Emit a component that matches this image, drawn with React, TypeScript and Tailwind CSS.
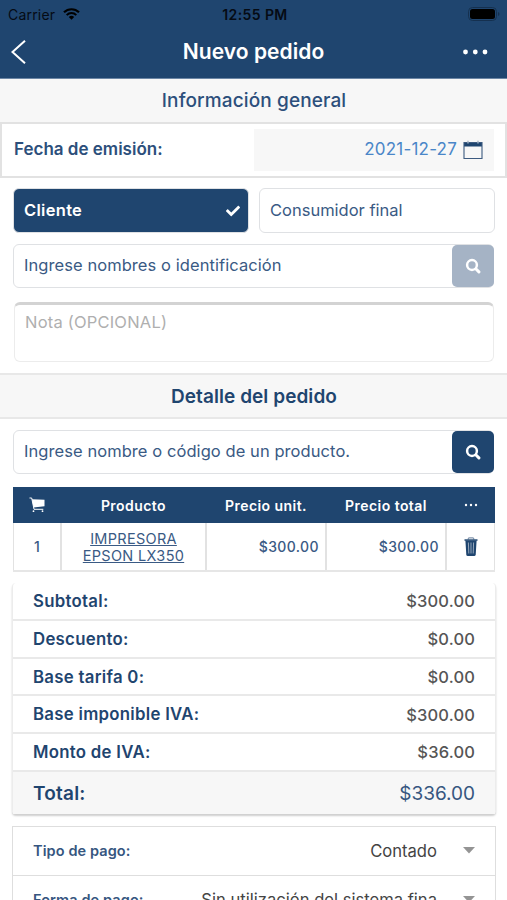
import { FaCheck } from "react-icons/fa";

const totals = [
  { label: "Subtotal:", value: "$300.00" },
  { label: "Descuento:", value: "$0.00" },
  { label: "Base tarifa 0:", value: "$0.00" },
  { label: "Base imponible IVA:", value: "$300.00" },
  { label: "Monto de IVA:", value: "$36.00" },
];

function SearchIcon() {
  return (
    <svg className="mr-px" width="16" height="16" viewBox="0 0 16 16" fill="none" stroke="white">
      <circle cx="7" cy="7" r="4.9" strokeWidth="2.5" />
      <path d="M11 11l2.9 2.9" strokeWidth="3" strokeLinecap="round" />
    </svg>
  );
}

function CalendarIcon() {
  return (
    <svg width="20" height="20" viewBox="0 0 20 20" fill="none">
      <path d="M1 2h18v4.5H1z" fill="#1f456f" />
      <path d="M1 2.5h18v16H1z" stroke="#3d5b80" strokeWidth="1.1" />
      <path d="M5 .8v2.6M15 .8v2.6" stroke="#a3b2c4" strokeWidth="1.4" />
    </svg>
  );
}

function CartIcon() {
  return (
    <svg className="mx-auto" width="16" height="16" viewBox="0 0 16 16" fill="none">
      <path d="M3 2.2l12.500.6v6.400L4.500 10.500z" fill="white" />
      <path d="M.5 1h2.200L5 12.300h9.300" stroke="white" strokeWidth="1" />
      <circle cx="4.500" cy="14.200" r=".9" fill="white" />
      <circle cx="13.500" cy="14.200" r=".9" fill="white" />
    </svg>
  );
}

function TrashIcon() {
  return (
    <svg width="14" height="20" viewBox="0 0 14 20" fill="none">
      <path d="M4.3 2.500V1.700q0-.9.9-.9h3.600q.9 0 .9.900v.8" stroke="#8295ad" strokeWidth="1.300" />
      <path d="M.5 2.300h13v1.500H.5z" fill="#1f456f" />
      <path d="M1.400 3.500h11.200l-.9 14q-.1 1.500-1.500 1.500H3.800q-1.400 0-1.500-1.500z" fill="#1f456f" />
      <path d="M4.400 5.500l.4 11M7 5.500v11M9.600 5.500l-.4 11" stroke="#a3b2c4" strokeWidth=".9" />
    </svg>
  );
}

function StatusBar() {
  return (
    <div className="flex h-7 items-center justify-between pr-[7px] pl-2 text-[#050b14]">
      <div className="flex w-40 items-center gap-2">
        <span className="text-[14px] tracking-[0.2px]">Carrier</span>
        <svg width="17" height="12" viewBox="0 0 17 12" fill="none" stroke="black">
          <path d="M1 4.3a10.7 10.7 0 0 1 15 0" strokeWidth="2.2" />
          <path d="M3.7 7.1a6.8 6.8 0 0 1 9.6 0" strokeWidth="2" />
          <path d="M8.5 11.8L5.8 9.1a3.8 3.8 0 0 1 5.4 0z" fill="black" stroke="none" />
        </svg>
      </div>
      <span className="pl-0.5 text-[14px] font-semibold tracking-[0.4px]">12:55 PM</span>
      <div className="flex w-40 justify-end">
        <svg width="32" height="14" viewBox="0 0 32 14">
          <rect x=".5" y=".5" width="28" height="13" rx="4" fill="none" stroke="#15304f" />
          <rect x="2" y="2" width="25" height="10" rx="2.5" fill="black" />
          <path d="M30 5v4q1.5-.5 1.5-2t-1.5-2z" fill="#15304f" />
        </svg>
      </div>
    </div>
  );
}

function Header() {
  return (
    <header className="h-[79px] border-b border-[#6c86a5] bg-[#1f456f]">
      <StatusBar />
      <div className="flex h-12 items-center justify-between px-[11px] text-white">
        <svg width="40" height="26" viewBox="0 0 40 26" fill="none" stroke="white" strokeWidth="2">
          <path d="M14 1.7L1.5 13L14 24.3" />
        </svg>
        <h1 className="text-[21px] font-semibold tracking-[0.05px]">Nuevo pedido</h1>
        <svg width="40" height="6" viewBox="0 0 40 6" fill="white">
          <circle cx="9.5" cy="3" r="2.4" />
          <circle cx="19.3" cy="3" r="2.4" />
          <circle cx="29" cy="3" r="2.4" />
        </svg>
      </div>
    </header>
  );
}

function SearchBox({ text, disabled }: { text: string; disabled?: boolean }) {
  return (
    <div className="mx-[13px] flex h-11 items-center justify-between rounded-md border border-[#dfe1e4] pl-[10px] text-[16.5px] tracking-[0.07px] text-[#3a5a84]">
      <span className="-mt-0.5">{text}</span>
      <button
        className={`-mr-px flex h-[42px] w-[42px] items-center justify-center rounded-[5px] ${
          disabled ? "bg-[#a5b3c5]" : "bg-[#1f456f]"
        }`}
      >
        <SearchIcon />
      </button>
    </div>
  );
}

function PaymentRow({ label, value }: { label: string; value: string }) {
  return (
    <div className="flex h-[49px] items-center border-b border-[#dedede] px-5">
      <span className="grow text-[14.5px] font-semibold tracking-[0.1px] text-[#365680]">{label}</span>
      <span className="text-[16.6px] text-[#444]">{value}</span>
      <svg className="ml-[26px]" width="12" height="7" viewBox="0 0 12 7">
        <path d="M0 0h12L6 6.5z" fill="#949494" />
      </svg>
    </div>
  );
}

export default function App() {
  return (
    <div className="h-[900px] overflow-hidden bg-white font-['Inter','Liberation_Sans',sans-serif] text-[#1f456f]">
      <Header />

      <h2 className="flex h-[43px] items-center justify-center bg-[#f7f7f7] pt-0.5 pl-px text-[19px] font-medium tracking-[0.12px] text-[#2c4f7b]">
        Información general
      </h2>
      <div className="flex h-14 items-center justify-between border-2 border-[#e2e2e2] pr-[11px] pl-3">
        <span className="text-[17px] font-semibold text-[#2c4f7b]">Fecha de emisión:</span>
        <div className="flex h-[42px] w-60 items-center justify-end gap-[6px] bg-[#f7f7f7] pr-[11px]">
          <span className="text-[17px] tracking-[0.2px] text-[#4a86c8]">2021-12-27</span>
          <CalendarIcon />
        </div>
      </div>

      <div className="mt-[10px] flex gap-[10px] pr-3 pl-[13px] text-[16.5px]">
        <button className="flex h-[45px] w-[236px] items-center justify-between rounded-md border border-[#dfe1e4] bg-[#1f456f] pr-2 pl-[10px] font-semibold tracking-[0.3px] text-white">
          Cliente <FaCheck size={14} />
        </button>
        <button className="h-[45px] w-[236px] rounded-md border border-[#dfe1e4] pl-[10px] text-left text-[#3a5a84]">
          Consumidor final
        </button>
      </div>
      <div className="mt-[11px]">
        <SearchBox text="Ingrese nombres o identificación" disabled />
      </div>
      <div className="mr-[13px] ml-[14px] mt-[14px] h-[60px] rounded-md border border-t-[3px] border-[#ececec] border-t-[#d3d3d3] px-[10px] pt-[5px] text-[16.5px] tracking-[0.2px] text-[#afafaf]">
        Nota (OPCIONAL)
      </div>

      <h2 className="mt-[11px] flex h-[46px] items-center justify-center border-y-2 border-[#e8e8e8] bg-[#f7f7f7] pt-0.5 pl-px text-[19px] font-semibold tracking-[0.06px]">
        Detalle del pedido
      </h2>
      <div className="mt-[11px]">
        <SearchBox text="Ingrese nombre o código de un producto." />
      </div>

      <div className="mr-3 ml-[13px] mt-[13px] border-b-2 border-[#e6e6e6]">
        <div className="grid h-9 grid-cols-[48px_145px_120px_120px_49px] items-center bg-[#1f456f] text-center text-[14px] font-semibold tracking-[0.45px] text-white">
          <CartIcon />
          <span>Producto</span>
          <span>Precio unit.</span>
          <span>Precio total</span>
          <svg className="mx-auto" width="14" height="4" viewBox="0 0 14 4" fill="white">
            <circle cx="2" cy="2" r="1.2" />
            <circle cx="7" cy="2" r="1.2" />
            <circle cx="12" cy="2" r="1.2" />
          </svg>
        </div>
        <div className="grid h-[47px] grid-cols-[48px_145px_120px_120px_48px] border-l border-[#e2e2e2] text-[14px] text-[#3a5a84]">
          <div className="flex items-center justify-center border-r-2 border-[#e2e2e2] font-medium">1</div>
          <div className="flex items-center justify-center border-r-2 border-[#e2e2e2] text-center text-[14.5px] leading-[17px] tracking-[0.3px] underline">
            IMPRESORA
            <br />
            EPSON LX350
          </div>
          <div className="flex items-center justify-end border-r-2 border-[#e2e2e2] pr-[6px] font-medium tracking-[0.4px]">
            $300.00
          </div>
          <div className="flex items-center justify-end border-r-2 border-[#e2e2e2] pr-[6px] font-medium tracking-[0.4px]">
            $300.00
          </div>
          <div className="flex items-center justify-center border-r border-[#e2e2e2]">
            <TrashIcon />
          </div>
        </div>
      </div>

      <div className="mr-[11px] ml-3 mt-[11px] rounded-sm border-x border-[#ececec] shadow-[0_2px_2px_#cfcfcf]">
        {totals.map((row) => (
          <div
            key={row.label}
            className="flex h-[37.8px] items-center justify-between border-b-2 border-[#e9e9e9] px-5 pt-[1.5px] text-[16.5px]"
          >
            <span className="text-[16.8px] font-semibold tracking-[0.28px]">{row.label}</span>
            <span className="font-medium tracking-[0.15px] text-[#555]">{row.value}</span>
          </div>
        ))}
        <div className="flex h-[42px] items-center justify-between bg-[#f7f7f7] px-5 pt-0.5 text-[19px]">
          <span className="font-semibold tracking-[0.2px]">Total:</span>
          <span className="text-[#365680]">$336.00</span>
        </div>
      </div>

      <div className="mr-[11px] ml-3 mt-[12px] border border-[#dedede]">
        <PaymentRow label="Tipo de pago:" value="Contado" />
        <PaymentRow label="Forma de pago:" value="Sin utilización del sistema fina" />
      </div>
    </div>
  );
}
